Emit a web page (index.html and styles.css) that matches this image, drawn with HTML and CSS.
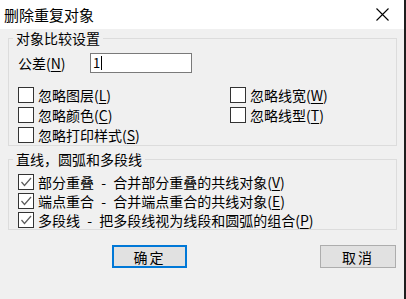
FILE: index.html
```html
<!DOCTYPE html>
<html lang="zh-CN">
<head>
<meta charset="utf-8">
<title>删除重复对象</title>
<link rel="stylesheet" href="styles.css">
</head>
<body>
<div class="window">
  <div class="titlebar">
    <span class="title">删除重复对象</span>
    <svg class="close" width="13" height="13" viewBox="0 0 13 13"><path d="M0.5 0.5 L12.5 12.5 M12.5 0.5 L0.5 12.5" stroke="#000" stroke-width="1.1" fill="none"/></svg>
  </div>
  <div class="body">
    <fieldset class="group group-compare">
      <legend>对象比较设置</legend>
      <div class="tol-row">
        <span class="tol-label">公差(<u>N</u>)</span>
        <div class="textbox"><span>1</span><span class="caret"></span></div>
      </div>
      <div class="cols">
        <div class="col col-left">
          <div class="check"><span class="box"></span><span>忽略图层(<u>L</u>)</span></div>
          <div class="check"><span class="box"></span><span>忽略颜色(<u>C</u>)</span></div>
          <div class="check"><span class="box"></span><span>忽略打印样式(<u>S</u>)</span></div>
        </div>
        <div class="col">
          <div class="check"><span class="box"></span><span>忽略线宽(<u>W</u>)</span></div>
          <div class="check"><span class="box"></span><span>忽略线型(<u>T</u>)</span></div>
        </div>
      </div>
    </fieldset>
    <fieldset class="group group-lines">
      <legend>直线，圆弧和多段线</legend>
      <div class="check row2"><span class="box"><svg width="14" height="14" viewBox="0 0 14 14"><path d="M2.5 7 L5.5 10.5 L12 3" stroke="#5c5c5c" stroke-width="1.2" fill="none"/></svg></span><span class="sp">部分重叠 - 合并部分重叠的共线对象(<u>V</u>)</span></div>
      <div class="check row2"><span class="box"><svg width="14" height="14" viewBox="0 0 14 14"><path d="M2.5 7 L5.5 10.5 L12 3" stroke="#5c5c5c" stroke-width="1.2" fill="none"/></svg></span><span class="sp">端点重合 - 合并端点重合的共线对象(<u>E</u>)</span></div>
      <div class="check row2"><span class="box"><svg width="14" height="14" viewBox="0 0 14 14"><path d="M2.5 7 L5.5 10.5 L12 3" stroke="#5c5c5c" stroke-width="1.2" fill="none"/></svg></span><span class="sp">多段线 - 把多段线视为线段和圆弧的组合(<u>P</u>)</span></div>
    </fieldset>
    <div class="buttons">
      <button class="btn btn-default">确定</button>
      <button class="btn">取消</button>
    </div>
  </div>
</div>
</body>
</html>
```
FILE: styles.css
```css
html, body {
  margin: 0;
  padding: 0;
}
body {
  width: 406px;
  height: 299px;
  overflow: hidden;
  background: #f0f0f0;
  font-family: "Noto Sans CJK SC", "Noto Sans", sans-serif;
  font-size: 14px;
  color: #000;
}
.window {
  width: 404px;
  height: 299px;
  border-right: 2px solid #1e1e1e;
  display: flex;
  flex-direction: column;
}
.titlebar {
  height: 29px;
  background: #fff;
  display: flex;
  align-items: center;
  justify-content: space-between;
  padding: 0 15px 1px 4px;
  box-sizing: border-box;
}
.title {
  font-size: 15px;
  line-height: 17px;
}
.close {
  display: block;
}
.body {
  padding: 1px 0 0 8px;
}
.group {
  margin: 0;
  width: 389px;
  box-sizing: border-box;
  border: 1px solid #dcdcdc;
  padding: 0 0 0 9px;
}
.group legend {
  padding: 0 3px;
  margin-left: -5px;
  line-height: 16px;
  font-size: 14px;
}
.tol-row {
  display: flex;
  align-items: center;
  height: 20px;
  margin-top: 7px;
}
.tol-label {
  width: 72px;
  line-height: 16px;
}
.textbox {
  width: 102px;
  height: 20px;
  box-sizing: border-box;
  border: 1px solid #7a7a7a;
  background: #fff;
  display: flex;
  align-items: center;
  padding-left: 2px;
  font-size: 13px;
  line-height: 14px;
}
.caret {
  display: inline-block;
  width: 1px;
  height: 14px;
  background: #000;
  margin-left: 1px;
}
.cols {
  display: flex;
  margin-top: 12px;
}
.col-left {
  width: 212px;
}
.check {
  display: flex;
  align-items: center;
  height: 20px;
  gap: 4px;
  line-height: 16px;
  white-space: nowrap;
}
.check.row2 {
  height: 19px;
}
.box {
  width: 16px;
  height: 16px;
  box-sizing: border-box;
  border: 1px solid #333;
  background: #fff;
  flex: none;
  display: flex;
  align-items: center;
  justify-content: center;
}
.box svg {
  display: block;
}
.sp {
  word-spacing: 4px;
}
.group-lines {
  margin-top: 5px;
  padding-top: 5px;
}
.buttons {
  display: flex;
  margin-top: 15px;
  padding-left: 104px;
  gap: 133px;
}
.btn {
  width: 75px;
  height: 23px;
  box-sizing: border-box;
  border: 1px solid #adadad;
  background: #e1e1e1;
  font-family: "Noto Sans CJK SC", "Noto Sans", sans-serif;
  font-size: 14px;
  line-height: 16px;
  padding: 0;
  color: #000;
  letter-spacing: 2px;
}
.btn:last-child {
  width: 76px;
}
.btn-default {
  border: 2px solid #0078d7;
}
u {
  text-decoration-thickness: 1px;
  text-underline-offset: 2px;
}
```
